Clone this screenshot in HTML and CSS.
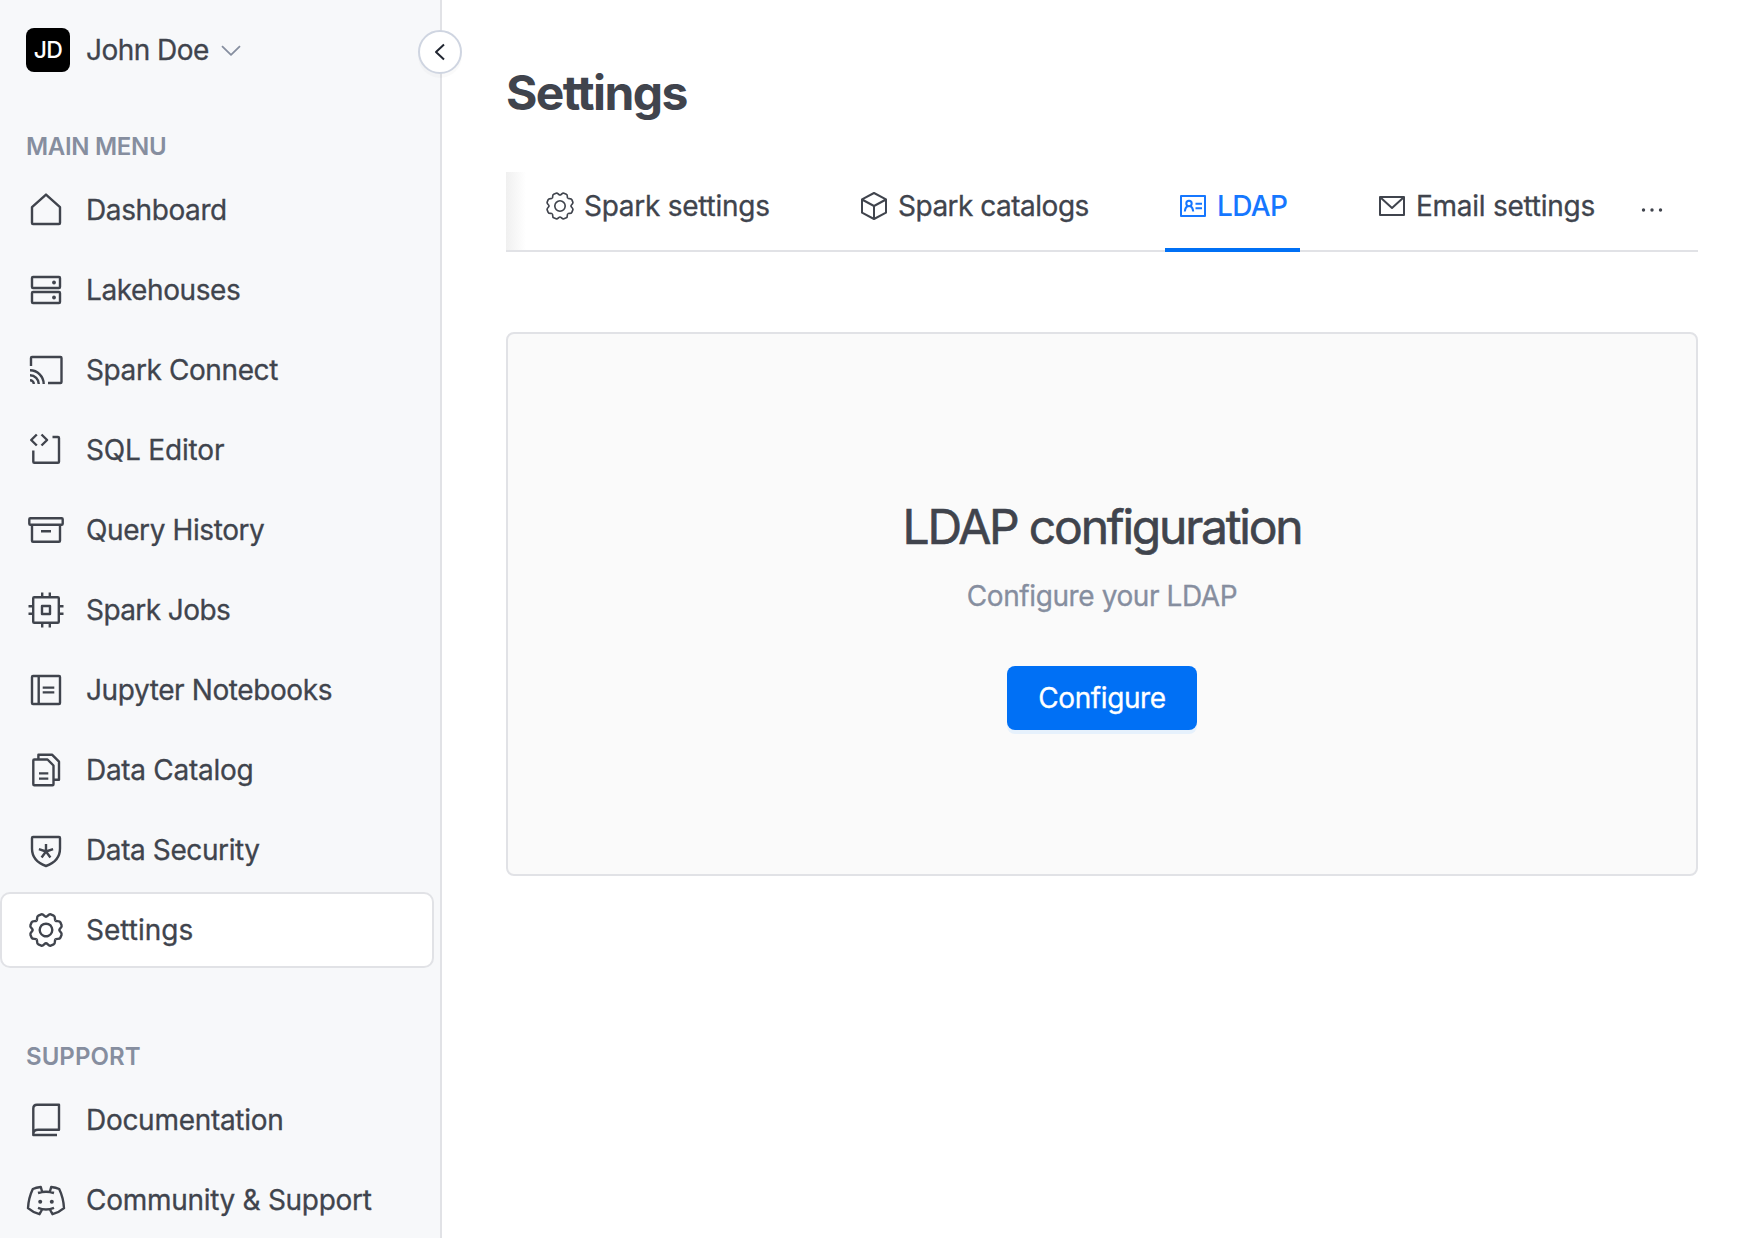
FILE: index.html
```
<!DOCTYPE html>
<html lang="en">
<head>
<meta charset="utf-8">
<title>Settings</title>
<link rel="stylesheet" href="styles.css">
</head>
<body>
<svg class="defs" width="0" height="0" aria-hidden="true">
  <defs>
    <path id="tooth" d="M-5.100-12.300C-3.600-12.900-3.900-16.200-1.600-16.200H1.600C3.900-16.200 3.600-12.900 5.100-12.300"/>
    <symbol id="cog" viewBox="0 0 40 40">
      <g transform="translate(20 20) rotate(22.5)">
        <use href="#tooth"/><use href="#tooth" transform="rotate(45)"/><use href="#tooth" transform="rotate(90)"/><use href="#tooth" transform="rotate(135)"/><use href="#tooth" transform="rotate(180)"/><use href="#tooth" transform="rotate(225)"/><use href="#tooth" transform="rotate(270)"/><use href="#tooth" transform="rotate(315)"/>
        <circle r="6.3"/>
      </g>
    </symbol>
  </defs>
</svg>
<div class="app">
  <aside class="sidebar">
    <div class="user">
      <span class="avatar">JD</span>
      <span class="user-name">John Doe</span>
      <svg class="chevron" viewBox="0 0 20 12"><path d="M1 1.2l9 8.6 9-8.6"/></svg>
    </div>
    <button class="collapse" aria-label="Collapse"><svg viewBox="0 0 12 18"><path d="M10 1.5L2 9l8 7.5"/></svg></button>
    <h2 class="menu-label">MAIN MENU</h2>
    <nav class="menu">
      <a class="item"><svg class="icon" viewBox="0 0 40 40"><path d="M6 17.2L20 4.6l14 12.6V33q0 1-1 1H7q-1 0-1-1z"/></svg><span>Dashboard</span></a>
      <a class="item"><svg class="icon" viewBox="0 0 40 40"><rect x="6" y="7" width="28" height="11" rx="1"/><rect x="6" y="22" width="28" height="11" rx="1"/><circle class="dot" cx="28" cy="12.5" r="1.9"/><circle class="dot" cx="28" cy="27.5" r="1.9"/></svg><span>Lakehouses</span></a>
      <a class="item"><svg class="icon" viewBox="0 0 40 40"><path d="M5 16V8q0-1 1-1h28.500q1 0 1 1v24q0 1-1 1H22M4 20.300A13.700 13.700 0 0 1 17.700 34M4 25.200A8.800 8.800 0 0 1 12.800 34M4 30.200A3.800 3.800 0 0 1 7.800 34"/></svg><span>Spark Connect</span></a>
      <a class="item loose"><svg class="icon" viewBox="0 0 40 40"><path d="M10.800 4.500L5.200 10l5.600 5.500M15.500 4.500L21.100 10l-5.600 5.500M7.300 20.500V31.700q0 1 1 1H32q1 0 1-1V8q0-1-1-1h-5.500"/></svg><span>SQL Editor</span></a>
      <a class="item"><svg class="icon" viewBox="0 0 40 40"><rect x="3.300" y="8.300" width="33.400" height="6.500" rx="1"/><path d="M6 15v15.700q0 1 1 1h26q1 0 1-1V15M15 21.200h10"/></svg><span>Query History</span></a>
      <a class="item tight"><svg class="icon" viewBox="0 0 40 40"><rect x="7.200" y="7.200" width="25.600" height="25.600" rx="1"/><rect x="16" y="16" width="8" height="8"/><path d="M16.200 2.500V7M23.800 2.500V7M16.200 33v4.500M23.800 33v4.500M2.500 16.200H7M2.500 23.800H7M33 16.200h4.500M33 23.800h4.500"/></svg><span>Spark Jobs</span></a>
      <a class="item"><svg class="icon" viewBox="0 0 40 40"><rect x="6" y="6" width="28" height="28" rx="1"/><path d="M12.700 6v28M16.700 17.600h11.600M16.700 22.400h11.600"/></svg><span>Jupyter Notebooks</span></a>
      <a class="item medium"><svg class="icon" viewBox="0 0 40 40"><path d="M7.300 10.500q0-1 1-1H21.500l6 6V34.300q0 1-1 1H8.300q-1 0-1-1zM12.400 9V4.700H26l7 7V29.700H28M13 23.400h9.300M13 28.600h9.300"/></svg><span>Data Catalog</span></a>
      <a class="item"><svg class="icon" viewBox="0 0 40 40"><path d="M6 8q0-1 1-1h26q1 0 1 1v10.500C34 27 28.500 33 20 36 11.500 33 6 27 6 18.500zM20 14v7.500M12.900 19.200L20 21.500l7.100-2.300M15.600 27.500l4.400-6 4.400 6"/></svg><span>Data Security</span></a>
      <a class="item active"><svg class="icon" viewBox="0 0 40 40"><use href="#cog"/></svg><span>Settings</span></a>
    </nav>
    <h2 class="menu-label support">SUPPORT</h2>
    <nav class="menu">
      <a class="item medium"><svg class="icon" viewBox="0 0 40 40"><path d="M31 35H7.300V8.500Q7.300 4.700 11 4.700H33V29.700H12Q7.300 29.700 7.300 34"/></svg><span>Documentation</span></a>
      <a class="item medium"><svg class="icon" viewBox="0 0 40 40"><path d="M12 13q8-2.600 16 0M16 11.300L14.800 7Q10 7.500 6.800 9 2.500 18 2 28.200q4.500 4 11.500 6L15.800 30M24 11.300L25.200 7q4.800.5 8 2 4.300 9 4.800 19.200-4.500 4-11.500 6L24.200 30M12 27.800q8 3.400 16 0"/><circle class="dot" cx="14.200" cy="21.700" r="2"/><circle class="dot" cx="25.800" cy="21.700" r="2"/></svg><span>Community &amp; Support</span></a>
    </nav>
  </aside>
  <main class="content">
    <h1>Settings</h1>
    <div class="tabs">
      <a class="tab spark"><svg class="tab-icon" viewBox="3 3 34 34"><use href="#cog" width="40" height="40"/></svg><span>Spark settings</span></a>
      <a class="tab catalogs"><svg class="tab-icon" viewBox="0 0 28 28"><path d="M14 1l12 6.300v13.400L14 27 2 20.700V7.300zM2 7.500L14 14l12-6.500M14 14v13"/></svg><span>Spark catalogs</span></a>
      <a class="tab current"><svg class="tab-icon" viewBox="0 0 28 28"><path d="M2 4h24v20H2z"/><circle cx="10" cy="11.500" r="2.700"/><path d="M5.800 19.500q.4-4 2.700-5.300M14.200 19.500q-.4-4-2.700-5.300M16.500 11.800H23M16.500 16.200H23"/></svg><span>LDAP</span></a>
      <a class="tab email"><svg class="tab-icon" viewBox="0 0 28 28"><path d="M2 5h24v18H2zM2.500 5.500L14 16 25.500 5.500"/></svg><span>Email settings</span></a>
      <button class="more" aria-label="More"><svg viewBox="0 0 24 6"><circle cx="3.500" cy="3" r="1.700"/><circle cx="12" cy="3" r="1.700"/><circle cx="20.500" cy="3" r="1.700"/></svg></button>
    </div>
    <section class="card">
      <h2>LDAP configuration</h2>
      <p>Configure your LDAP</p>
      <button class="primary">Configure</button>
    </section>
  </main>
</div>
</body>
</html>
```
FILE: styles.css
```
* { box-sizing: border-box; }
body { margin: 0; background: #fff; color: #40444d; font-family: Inter, "Liberation Sans", sans-serif; font-size: 28px; line-height: 40px; letter-spacing: -.4px; -webkit-text-stroke: .3px currentColor; }
h1, h2, p { margin: 0; font-weight: 400; }
button { border: 0; padding: 0; font: inherit; letter-spacing: inherit; }
svg { display: block; fill: none; stroke: currentColor; stroke-width: 2.4; stroke-linejoin: round; flex: none; }
.defs { position: absolute; }
.app { display: flex; height: 1238px; overflow: hidden; }
.sidebar { position: relative; width: 442px; flex: none; background: #f7f8fa; border-right: 2px solid #e1e2e6; padding-top: 28px; }
.user { display: flex; align-items: center; height: 44px; padding-left: 26px; }
.user-name { letter-spacing: -.55px; }
.avatar { width: 44px; height: 44px; border-radius: 8px; background: #000; color: #fff; font-size: 23px; font-weight: 500; letter-spacing: -.7px; line-height: 44px; text-align: center; margin-right: 16px; -webkit-text-stroke: 0; }
.chevron { width: 20px; height: 12px; margin: 2px 0 0 12px; color: #868e9f; stroke-width: 1.8; }
.collapse { position: absolute; left: 418px; top: 30px; width: 44px; height: 44px; border: 2px solid #cfd5e1; border-radius: 50%; background: #fff; color: #212631; display: flex; align-items: center; justify-content: center; box-shadow: 0 4px 0 rgba(0,0,0,.02); z-index: 1; }
.collapse svg { width: 12px; height: 18px; stroke-width: 2; }
.menu-label { margin: 57px 0 27px 26px; height: 36px; line-height: 36px; font-size: 24px; font-weight: 600; letter-spacing: -.3px; color: #868e9f; -webkit-text-stroke: 0; }
.menu-label.support { margin-top: 71px; margin-bottom: 27px; letter-spacing: .05px; }
.menu { display: flex; flex-direction: column; gap: 4px; margin-top: -20px; }
.item { height: 76px; width: 434px; border: 2px solid transparent; border-radius: 10px; display: flex; align-items: center; gap: 20px; padding-left: 24px; }
.item.active { background: #fff; border-color: #e1e2e6; letter-spacing: 0; }
.item.loose { letter-spacing: -.18px; }
.item.medium { letter-spacing: -.29px; }
.item.tight { letter-spacing: -.58px; }
.icon { width: 40px; height: 40px; }
.dot { fill: currentColor; stroke: none; }
.content { flex: 1; padding: 63px 56px 0 64px; }
h1 { height: 60px; line-height: 60px; font-size: 48px; font-weight: 700; letter-spacing: -1.6px; -webkit-text-stroke: 0; }
.tabs { display: flex; height: 80px; margin-top: 49px; padding-left: 26px; gap: 64px; border-bottom: 2px solid #e1e2e6; background: linear-gradient(to right, #f0f0f0, #fff 20px); }
.tab { display: flex; align-items: center; gap: 10px; height: 80px; padding: 0 0 12px 14px; white-space: nowrap; flex: none; }
.tab.spark { width: 250px; letter-spacing: -.26px; }
.tab.catalogs { width: 255px; letter-spacing: -.5px; }
.tab.email { width: 244px; letter-spacing: -.25px; }
.tab-icon { width: 28px; height: 28px; stroke-width: 2; }
.tab.current { width: 135px; color: #1677ff; font-weight: 500; border-bottom: 4px solid #0070f5; padding-bottom: 8px; letter-spacing: -.6px; -webkit-text-stroke: 0; }
.more { background: none; color: inherit; height: 76px; margin-left: -32px; }
.more svg { width: 24px; height: 6px; fill: currentColor; stroke: none; }
.card { height: 544px; margin-top: 80px; border: 2px solid #e1e2e6; border-radius: 8px; background: #fafafa; display: flex; flex-direction: column; align-items: center; padding-top: 163px; }
.card h2 { font-size: 48px; line-height: 60px; letter-spacing: -2.2px; -webkit-text-stroke: .6px currentColor; }
.card p { margin-top: 19px; color: #868e9f; }
.primary { margin-top: 50px; width: 190px; height: 64px; border-radius: 8px; background: #0070f5; color: #fff; box-shadow: 0 4px 0 #e6f1fc; }
```
